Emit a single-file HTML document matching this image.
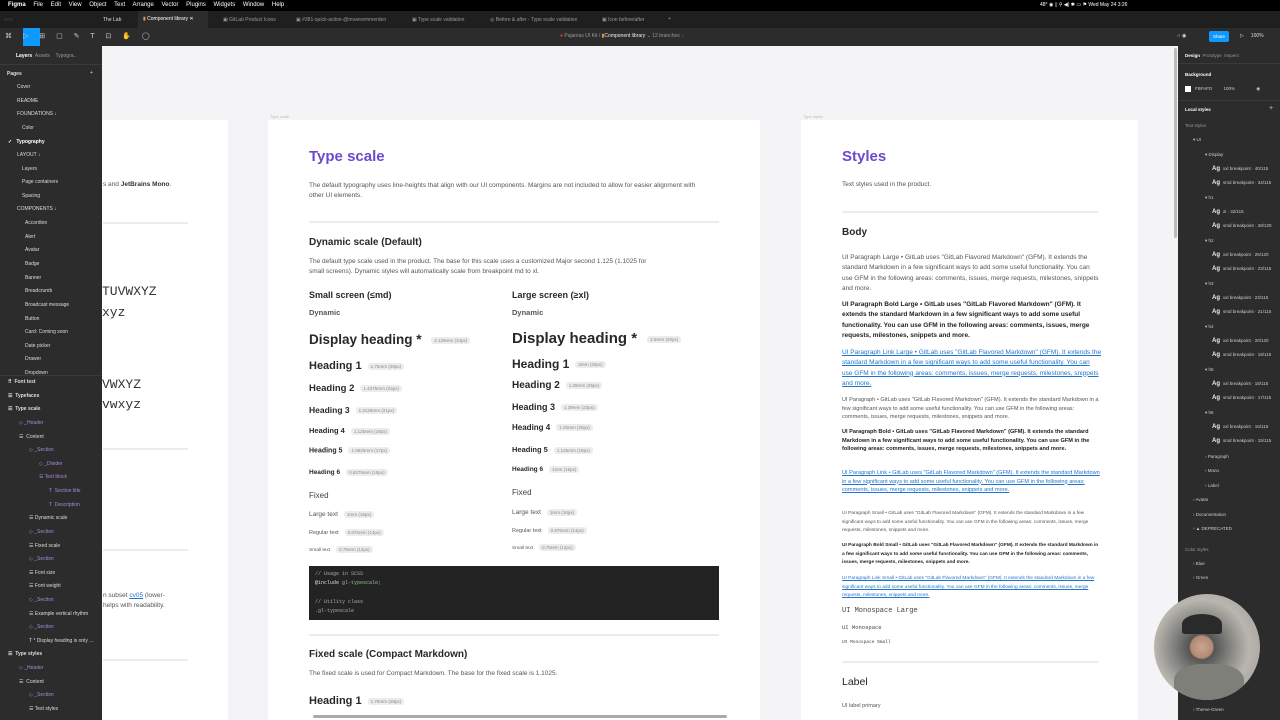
<!DOCTYPE html>
<html><head><meta charset="utf-8"><style>
*{margin:0;padding:0;box-sizing:border-box}
body{width:1280px;height:720px;overflow:hidden;background:#f4f4f6;font-family:"Liberation Sans",sans-serif;position:relative}
.a{position:absolute;white-space:nowrap}
.dk{color:#ddd;font-size:5px}
.b{font-weight:bold}
.pill{display:inline-block;background:#ececef;color:#888;font-size:4.5px;padding:1px 3px;border-radius:3px;vertical-align:middle;margin-left:6px;font-weight:normal}
.h{color:#28272d;font-weight:bold}
.p{color:#555;font-size:6.5px;line-height:10.3px;white-space:normal}
.hr{position:absolute;height:1.5px;background:#ececef}
.lp div{position:absolute;font-size:5px;color:#ddd;white-space:nowrap}
.pu{color:#a98bd8!important}
.rp div{position:absolute;font-size:4.5px;color:#ccc;white-space:nowrap}
.rp b{color:#eee;font-size:6px;margin-right:3px}
.lk{color:#1f75cb;text-decoration:underline}
</style></head><body>
<div class="a" style="left:0;top:0;width:1280px;height:11px;background:#000"></div>
<div class="a" style="left:8px;top:2px;font-size:6px;color:#fff;word-spacing:6px"> <b>Figma</b> File Edit View Object Text Arrange Vector Plugins Widgets Window Help</div>
<div class="a" style="left:1040px;top:2px;font-size:5px;color:#fff">48°  ◉ ▯ ⚲  ◀) ✱ ▭ ⚑ Wed May 24 3:26</div>
<div class="a" style="left:0;top:11px;width:1280px;height:17px;background:#1f1f1f"></div>
<div class="a" style="left:4px;top:17px;font-size:5px;color:#666">○○○</div>
<div class="a" style="left:138px;top:11px;width:70px;height:17px;background:#2c2c2c"></div>
<div class="a dk" style="left:103px;top:17px">The Lab</div>
<div class="a" style="left:143px;top:16px;font-size:5px;color:#fff"><span style="color:#e8a33a">▮</span> Component library ✕</div>
<div class="a dk" style="left:223px;top:17px;color:#999">▣ GitLab Product Icons</div>
<div class="a dk" style="left:296px;top:17px;color:#999">▣ #381-quick-action-@mvanremmerden</div>
<div class="a dk" style="left:412px;top:17px;color:#999">▣ Type scale validation</div>
<div class="a dk" style="left:490px;top:17px;color:#999">◎ Before &amp; after - Type scale validation</div>
<div class="a dk" style="left:602px;top:17px;color:#999">▣ Icon before/after</div>
<div class="a dk" style="left:668px;top:16px;color:#999">+</div>
<div class="a" style="left:0;top:28px;width:1280px;height:18px;background:#2c2c2c"></div>
<div class="a" style="left:23px;top:28px;width:17px;height:18px;background:#0d99ff"></div>
<div class="a" style="left:5px;top:32px;font-size:7px;color:#ccc;word-spacing:9px">⌘ ▷ ⊞ ▢ ✎ T ⊡ ✋ ◯</div>
<div class="a" style="left:560px;top:33px;font-size:5px;color:#999"><span style="color:#e24329">●</span>  Pajamas UI Kit / <span style="color:#e8a33a">▮</span><span style="color:#eee">Component library</span> ⌄  12 branches ◌</div>
<div class="a" style="left:1209px;top:31px;width:20px;height:11px;background:#0d99ff;border-radius:2px;color:#fff;font-size:4.5px;text-align:center;line-height:11px">Share</div>
<div class="a dk" style="left:1177px;top:33px">∩ ◉</div>
<div class="a dk" style="left:1240px;top:33px">▷ &nbsp; &nbsp; 100%</div>
<div class="a lp" style="left:0;top:46px;width:102px;height:674px;background:#2c2c2c">
<div style="left:16px;top:7px;font-weight:bold;color:#fff">Layers <span style="color:#999;font-weight:normal">&nbsp;Assets &nbsp; &nbsp;Typogra..</span></div>
<div style="left:0;top:18px;width:102px;height:1px;background:#3a3a3a"></div>
<div style="left:7px;top:25px;font-weight:bold">Pages</div><div style="left:90px;top:24px">+</div>
<div style="left:17px;top:38px">Cover</div>
<div style="left:17px;top:52px">README</div>
<div style="left:17px;top:65px">FOUNDATIONS ↓</div>
<div style="left:22px;top:79px">Color</div>
<div style="left:8px;top:93px;color:#fff;font-weight:bold">✓ &nbsp; Typography</div>
<div style="left:17px;top:106px">LAYOUT ↓</div>
<div style="left:22px;top:120px">Layers</div>
<div style="left:22px;top:133px">Page containers</div>
<div style="left:22px;top:147px">Spacing</div>
<div style="left:17px;top:160px">COMPONENTS ↓</div>
<div style="left:25px;top:174px">Accordion</div><div style="left:25px;top:188px">Alert</div><div style="left:25px;top:201px">Avatar</div><div style="left:25px;top:215px">Badge</div><div style="left:25px;top:229px">Banner</div><div style="left:25px;top:242px">Breadcrumb</div><div style="left:25px;top:256px">Broadcast message</div><div style="left:25px;top:270px">Button</div><div style="left:25px;top:283px">Card: Coming soon</div><div style="left:25px;top:297px">Date picker</div><div style="left:25px;top:310px">Drawer</div><div style="left:25px;top:324px">Dropdown</div>
<div style="left:0;top:329px;width:102px;height:1px;background:#3a3a3a"></div>
<div style="left:8px;top:333px;font-weight:bold">⠿ &nbsp;Font test</div>
<div style="left:8px;top:347px;font-weight:bold">☰ &nbsp;Typefaces</div>
<div style="left:8px;top:360px;font-weight:bold">☰ &nbsp;Type scale</div>
<div class="pu" style="left:19px;top:374px">◇ _Header</div>
<div style="left:19px;top:388px">☰ &nbsp;Content</div>
<div class="pu" style="left:29px;top:401px">◇ _Section</div>
<div class="pu" style="left:39px;top:415px">◇ _Divider</div>
<div class="pu" style="left:39px;top:428px">☰ Text block</div>
<div class="pu" style="left:49px;top:442px">T &nbsp;Section title</div>
<div class="pu" style="left:49px;top:456px">T &nbsp;Description</div>
<div style="left:29px;top:469px">☰ Dynamic scale</div>
<div class="pu" style="left:29px;top:483px">◇ _Section</div>
<div style="left:29px;top:497px">☰ Fixed scale</div>
<div class="pu" style="left:29px;top:510px">◇ _Section</div>
<div style="left:29px;top:524px">☰ Font size</div>
<div style="left:29px;top:537px">☰ Font weight</div>
<div class="pu" style="left:29px;top:551px">◇ _Section</div>
<div style="left:29px;top:565px">☰ Example vertical rhythm</div>
<div class="pu" style="left:29px;top:578px">◇ _Section</div>
<div style="left:29px;top:592px">T * Display heading is only ...</div>
<div style="left:8px;top:605px;font-weight:bold">☰ &nbsp;Type styles</div>
<div class="pu" style="left:19px;top:619px">◇ _Header</div>
<div style="left:19px;top:633px">☰ &nbsp;Content</div>
<div class="pu" style="left:29px;top:646px">◇ _Section</div>
<div style="left:29px;top:660px">☰ Text styles</div>
</div>
<div class="a" style="left:102px;top:120px;width:126px;height:600px;background:#fff"></div>
<div class="a" style="left:268px;top:120px;width:492px;height:600px;background:#fff"></div>
<div class="a" style="left:801px;top:120px;width:337px;height:600px;background:#fff"></div>
<div class="a" style="left:270px;top:114px;font-size:4px;color:#bbb">Type scale</div>
<div class="a" style="left:803px;top:114px;font-size:4px;color:#bbb">Type styles</div>
<div class="a" style="left:1174px;top:48px;width:3px;height:190px;background:#bbb;border-radius:2px"></div>
<div class="a" style="left:103px;top:181px;font-size:6.5px;color:#555">s and <b style="color:#333">JetBrains Mono</b>.</div>
<div class="hr" style="left:103px;top:222px;width:85px"></div>
<div class="a" style="left:102px;top:284px;font-size:13px;color:#333;font-family:'Liberation Mono',monospace">TUVWXYZ</div>
<div class="a" style="left:102px;top:305px;font-size:13px;color:#333;font-family:'Liberation Mono',monospace">xyz</div>
<div class="a" style="left:102px;top:377px;font-size:13px;color:#333;font-family:'Liberation Mono',monospace">VWXYZ</div>
<div class="a" style="left:102px;top:397px;font-size:13px;color:#333;font-family:'Liberation Mono',monospace">vwxyz</div>
<div class="hr" style="left:103px;top:448px;width:85px"></div>
<div class="hr" style="left:103px;top:549px;width:85px"></div>
<div class="a" style="left:103px;top:592px;font-size:6.5px;color:#555">n subset <span class="lk">cv05</span> (lower-</div>
<div class="a" style="left:103px;top:602px;font-size:6.5px;color:#555">helps with readability.</div>
<div class="hr" style="left:103px;top:659px;width:85px"></div>
<div class="a" style="left:309px;top:148px;font-size:15px;font-weight:bold;color:#6e49cb">Type scale</div>
<div class="a p" style="left:309px;top:181px;width:392px">The default typography uses line-heights that align with our UI components. Margins are not included to allow for easier alignment with other UI elements.</div>
<div class="hr" style="left:309px;top:221px;width:410px"></div>
<div class="a h" style="left:309px;top:237px;font-size:10px">Dynamic scale (Default)</div>
<div class="a p" style="left:309px;top:257px;width:340px">The default type scale used in the product. The base for this scale uses a customized Major second 1.125 (1.1025 for small screens). Dynamic styles will automatically scale from breakpoint md to xl.</div>
<div class="a h" style="left:309px;top:290px;font-size:9px">Small screen (≤md)</div>
<div class="a" style="left:309px;top:308px;font-size:7.5px;color:#555;font-weight:bold">Dynamic</div>
<div class="a h" style="left:309px;top:332px;font-size:13.5px">Display heading * <span class="pill">2.125rem (34px)</span></div>
<div class="a h" style="left:309px;top:360px;font-size:11px">Heading 1<span class="pill">1.75rem (28px)</span></div>
<div class="a h" style="left:309px;top:383px;font-size:9.5px">Heading 2<span class="pill">1.4375rem (23px)</span></div>
<div class="a h" style="left:309px;top:405px;font-size:8.5px">Heading 3<span class="pill">1.3125rem (21px)</span></div>
<div class="a h" style="left:309px;top:426px;font-size:7.5px">Heading 4<span class="pill">1.125rem (18px)</span></div>
<div class="a h" style="left:309px;top:447px;font-size:7px">Heading 5<span class="pill">1.0625rem (17px)</span></div>
<div class="a h" style="left:309px;top:469px;font-size:6.5px">Heading 6<span class="pill">0.9375rem (15px)</span></div>
<div class="a" style="left:309px;top:491px;font-size:8px;color:#444">Fixed</div>
<div class="a" style="left:309px;top:511px;font-size:6.5px;color:#555">Large text<span class="pill">1rem (16px)</span></div>
<div class="a" style="left:309px;top:529px;font-size:5.5px;color:#555">Regular text<span class="pill">0.875rem (14px)</span></div>
<div class="a" style="left:309px;top:546px;font-size:4.8px;color:#555">Small text<span class="pill">0.75rem (12px)</span></div>
<div class="a h" style="left:512px;top:290px;font-size:9px">Large screen (≥xl)</div>
<div class="a" style="left:512px;top:308px;font-size:7.5px;color:#555;font-weight:bold">Dynamic</div>
<div class="a h" style="left:512px;top:330px;font-size:15px">Display heading * <span class="pill">2.5rem (40px)</span></div>
<div class="a h" style="left:512px;top:357px;font-size:12px">Heading 1<span class="pill">2rem (32px)</span></div>
<div class="a h" style="left:512px;top:380px;font-size:10px">Heading 2<span class="pill">1.28rem (25px)</span></div>
<div class="a h" style="left:512px;top:402px;font-size:9px">Heading 3<span class="pill">1.39rem (23px)</span></div>
<div class="a h" style="left:512px;top:423px;font-size:8px">Heading 4<span class="pill">1.25rem (20px)</span></div>
<div class="a h" style="left:512px;top:445px;font-size:7.5px">Heading 5<span class="pill">1.125rem (18px)</span></div>
<div class="a h" style="left:512px;top:466px;font-size:6.5px">Heading 6<span class="pill">1rem (16px)</span></div>
<div class="a" style="left:512px;top:488px;font-size:8px;color:#444">Fixed</div>
<div class="a" style="left:512px;top:509px;font-size:6.5px;color:#555">Large text<span class="pill">1rem (16px)</span></div>
<div class="a" style="left:512px;top:527px;font-size:5.5px;color:#555">Regular text<span class="pill">0.875rem (14px)</span></div>
<div class="a" style="left:512px;top:544px;font-size:4.8px;color:#555">Small text<span class="pill">0.75rem (12px)</span></div>
<div class="a" style="left:309px;top:566px;width:410px;height:54px;background:#232323;font-family:'Liberation Mono',monospace;font-size:5px;color:#aaa;line-height:9.3px;padding:4px 6px;white-space:pre">// Usage in SCSS
<span style="color:#ddd">@include</span> <span style="color:#8fc28f">gl-typescale;</span>

// Utility class
.gl-typescale</div>
<div class="hr" style="left:309px;top:634px;width:410px"></div>
<div class="a h" style="left:309px;top:649px;font-size:10px">Fixed scale (Compact Markdown)</div>
<div class="a p" style="left:309px;top:669px">The fixed scale is used for Compact Markdown. The base for the fixed scale is 1.1025.</div>
<div class="a h" style="left:309px;top:695px;font-size:11px">Heading 1<span class="pill">1.75rem (28px)</span></div>
<div class="a" style="left:313px;top:715px;width:414px;height:3px;background:#aaa;border-radius:2px"></div>
<div class="a" style="left:842px;top:148px;font-size:15px;font-weight:bold;color:#6e49cb">Styles</div>
<div class="a p" style="left:842px;top:180px">Text styles used in the product.</div>
<div class="hr" style="left:842px;top:211px;width:256px"></div>
<div class="a h" style="left:842px;top:227px;font-size:10px">Body</div>
<div class="a p" style="left:842px;top:253px;width:260px">UI Paragraph Large • GitLab uses "GitLab Flavored Markdown" (GFM). It extends the standard Markdown in a few significant ways to add some useful functionality. You can use GFM in the following areas: comments, issues, merge requests, milestones, snippets and more.</div>
<div class="a p" style="left:842px;top:300px;width:260px;color:#222;font-weight:bold">UI Paragraph Bold Large • GitLab uses "GitLab Flavored Markdown" (GFM). It extends the standard Markdown in a few significant ways to add some useful functionality. You can use GFM in the following areas: comments, issues, merge requests, milestones, snippets and more.</div>
<div class="a p lk" style="left:842px;top:348px;width:260px">UI Paragraph Link Large • GitLab uses "GitLab Flavored Markdown" (GFM). It extends the standard Markdown in a few significant ways to add some useful functionality. You can use GFM in the following areas: comments, issues, merge requests, milestones, snippets and more.</div>
<div class="a p" style="left:842px;top:396px;width:260px;font-size:5.6px;line-height:8.6px">UI Paragraph • GitLab uses "GitLab Flavored Markdown" (GFM). It extends the standard Markdown in a few significant ways to add some useful functionality. You can use GFM in the following areas: comments, issues, merge requests, milestones, snippets and more.</div>
<div class="a p" style="left:842px;top:428px;width:260px;font-size:5.6px;line-height:8.6px;color:#222;font-weight:bold">UI Paragraph Bold • GitLab uses "GitLab Flavored Markdown" (GFM). It extends the standard Markdown in a few significant ways to add some useful functionality. You can use GFM in the following areas: comments, issues, merge requests, milestones, snippets and more.</div>
<div class="a p lk" style="left:842px;top:469px;width:260px;font-size:5.6px;line-height:8.6px">UI Paragraph Link • GitLab uses "GitLab Flavored Markdown" (GFM). It extends the standard Markdown in a few significant ways to add some useful functionality. You can use GFM in the following areas: comments, issues, merge requests, milestones, snippets and more.</div>
<div class="a p" style="left:842px;top:510px;width:260px;font-size:4.8px;line-height:8.6px">UI Paragraph Small • GitLab uses "GitLab Flavored Markdown" (GFM). It extends the standard Markdown in a few significant ways to add some useful functionality. You can use GFM in the following areas: comments, issues, merge requests, milestones, snippets and more.</div>
<div class="a p" style="left:842px;top:542px;width:260px;font-size:4.8px;line-height:8.6px;color:#222;font-weight:bold">UI Paragraph Bold Small • GitLab uses "GitLab Flavored Markdown" (GFM). It extends the standard Markdown in a few significant ways to add some useful functionality. You can use GFM in the following areas: comments, issues, merge requests, milestones, snippets and more.</div>
<div class="a p lk" style="left:842px;top:575px;width:260px;font-size:4.8px;line-height:8.6px">UI Paragraph Link Small • GitLab uses "GitLab Flavored Markdown" (GFM). It extends the standard Markdown in a few significant ways to add some useful functionality. You can use GFM in the following areas: comments, issues, merge requests, milestones, snippets and more.</div>
<div class="a" style="left:842px;top:607px;font-family:'Liberation Mono',monospace;font-size:7px;color:#444">UI Monospace Large</div>
<div class="a" style="left:842px;top:624px;font-family:'Liberation Mono',monospace;font-size:5.5px;color:#444">UI Monospace</div>
<div class="a" style="left:842px;top:640px;font-family:'Liberation Mono',monospace;font-size:4.5px;color:#444">UI Monospace Small</div>
<div class="hr" style="left:842px;top:661px;width:256px"></div>
<div class="a" style="left:842px;top:676px;font-size:10.5px;color:#222">Label</div>
<div class="a" style="left:842px;top:703px;font-size:5.5px;color:#555">UI label primary</div>
<div class="a rp" style="left:1178px;top:46px;width:102px;height:674px;background:#2c2c2c">
<div style="left:7px;top:7px;color:#fff;font-weight:bold">Design <span style="color:#999;font-weight:normal">&nbsp;Prototype &nbsp;Inspect</span></div>
<div style="left:0;top:17px;width:102px;height:1px;background:#3a3a3a"></div>
<div style="left:7px;top:26px;color:#fff;font-weight:bold">Background</div>
<div style="left:7px;top:40px;width:6px;height:6px;background:#fff"></div>
<div style="left:17px;top:40px">FBFAFD &nbsp; &nbsp; &nbsp; &nbsp; 100% &nbsp; &nbsp; &nbsp; &nbsp; &nbsp; &nbsp; &nbsp; &nbsp; ◉</div>
<div style="left:0;top:54px;width:102px;height:1px;background:#3a3a3a"></div>
<div style="left:7px;top:61px;color:#fff;font-weight:bold">Local styles</div><div style="left:91px;top:59px;font-size:7px">+</div>
<div style="left:7px;top:77px;color:#999">Text styles</div>
<div style="left:15px;top:91px">▾ UI</div>
<div style="left:27px;top:106px">▾ Display</div>
<div style="left:34px;top:120px"><b>Ag</b>xxl breakpoint · 40/115</div>
<div style="left:34px;top:134px"><b>Ag</b>smd breakpoint · 34/115</div>
<div style="left:27px;top:149px">▾ h1</div>
<div style="left:34px;top:163px"><b>Ag</b>xl · 32/115</div>
<div style="left:34px;top:177px"><b>Ag</b>smd breakpoint · 28/120</div>
<div style="left:27px;top:192px">▾ h2</div>
<div style="left:34px;top:206px"><b>Ag</b>xxl breakpoint · 25/120</div>
<div style="left:34px;top:220px"><b>Ag</b>smd breakpoint · 23/115</div>
<div style="left:27px;top:235px">▾ h3</div>
<div style="left:34px;top:249px"><b>Ag</b>xxl breakpoint · 23/115</div>
<div style="left:34px;top:263px"><b>Ag</b>smd breakpoint · 21/115</div>
<div style="left:27px;top:278px">▾ h4</div>
<div style="left:34px;top:292px"><b>Ag</b>xxl breakpoint · 20/120</div>
<div style="left:34px;top:306px"><b>Ag</b>smd breakpoint · 19/115</div>
<div style="left:27px;top:321px">▾ h5</div>
<div style="left:34px;top:335px"><b>Ag</b>xxl breakpoint · 18/115</div>
<div style="left:34px;top:349px"><b>Ag</b>smd breakpoint · 17/115</div>
<div style="left:27px;top:364px">▾ h6</div>
<div style="left:34px;top:378px"><b>Ag</b>xxl breakpoint · 16/115</div>
<div style="left:34px;top:392px"><b>Ag</b>smd breakpoint · 15/115</div>
<div style="left:27px;top:408px">› Paragraph</div>
<div style="left:27px;top:422px">› Mono</div>
<div style="left:27px;top:437px">› Label</div>
<div style="left:15px;top:451px">› Avatar</div>
<div style="left:15px;top:466px">› Documentation</div>
<div style="left:15px;top:480px">› ▲ DEPRECATED</div>
<div style="left:7px;top:501px;color:#999">Color styles</div>
<div style="left:15px;top:515px">› Blue</div>
<div style="left:15px;top:529px">› Green</div>
<div style="left:15px;top:661px">› Theme-Green</div>
</div>
<div class="a" style="left:1154px;top:594px;width:106px;height:106px;border-radius:50%;background:radial-gradient(circle at 45% 50%,#c9a58f 0,#b08a74 14%,#555 16%,#8c8c88 40%,#b8b6ae 60%,#9a9790 100%);overflow:hidden">
<div style="position:absolute;left:20px;top:70px;width:70px;height:40px;background:#7d7f78;border-radius:40% 40% 0 0"></div>
<div style="position:absolute;left:28px;top:20px;width:40px;height:20px;background:#2a2a2a;border-radius:50% 50% 10% 10%"></div>
</div>
</body></html>
